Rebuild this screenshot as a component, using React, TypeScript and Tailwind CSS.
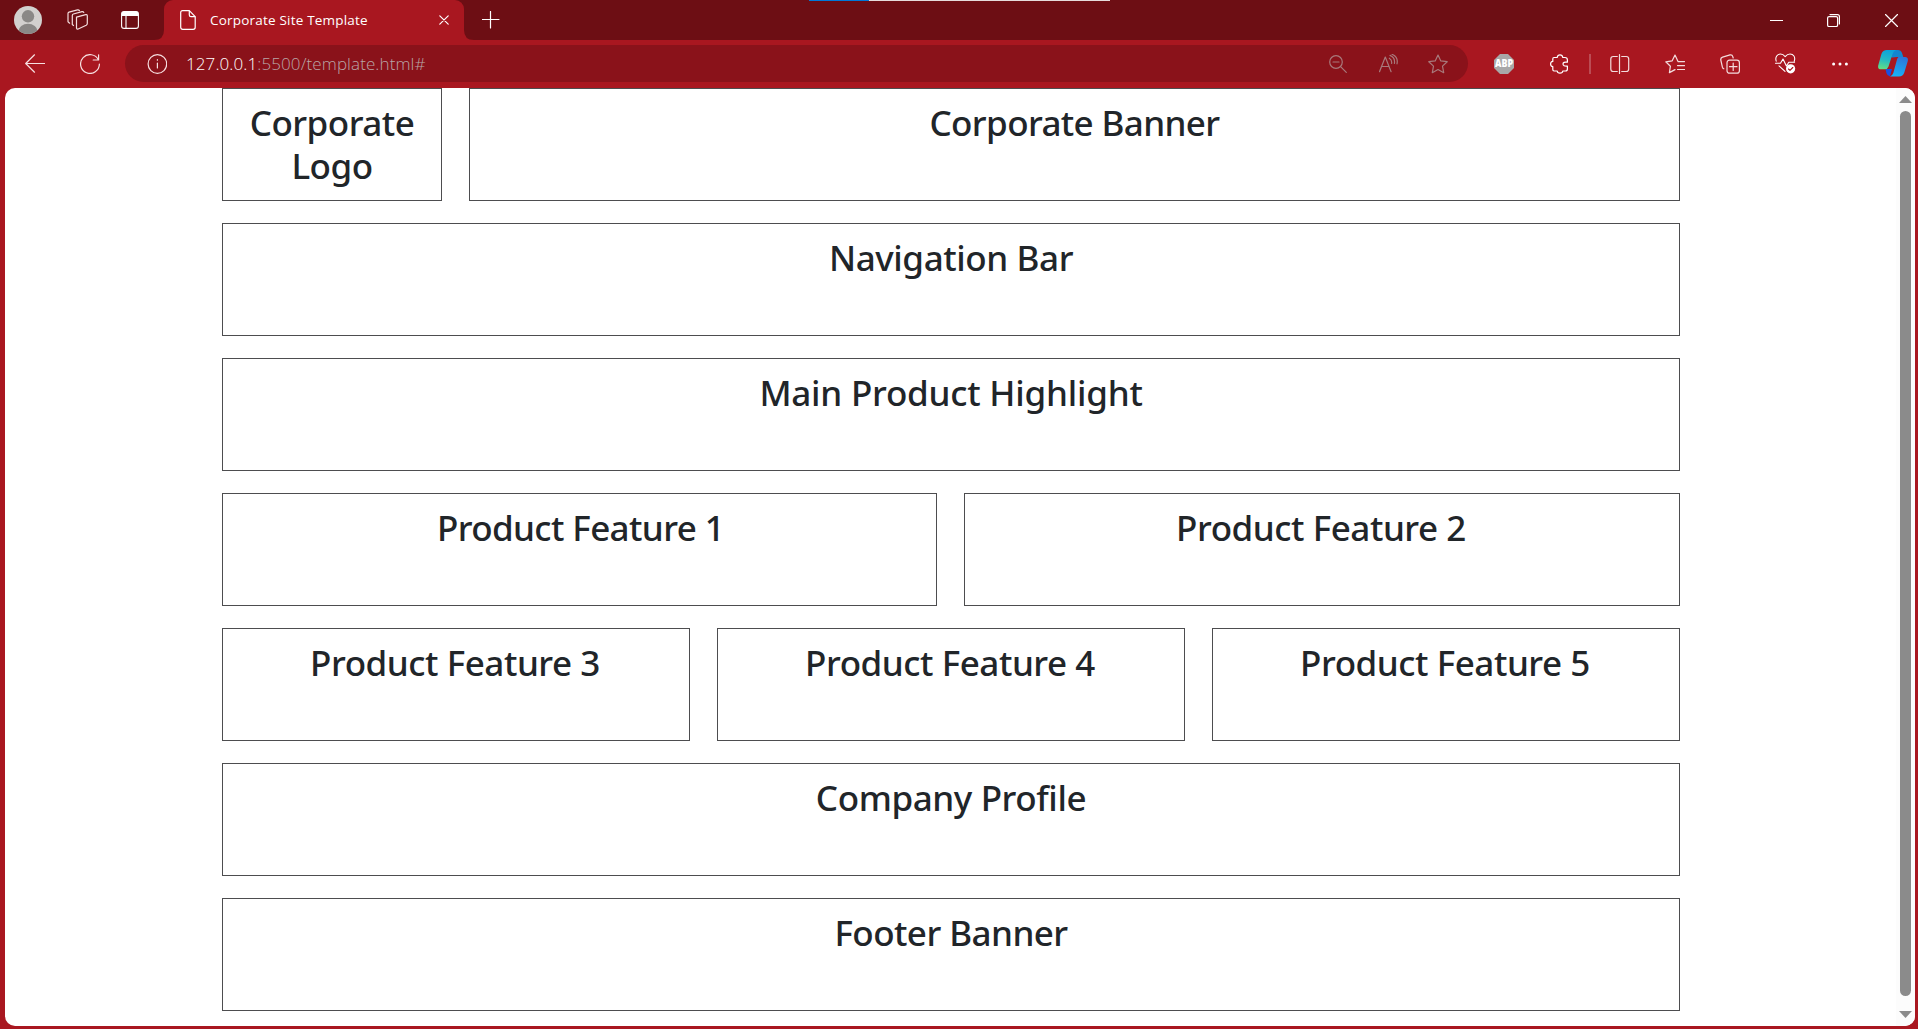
import React from "react";

const heading =
  "font-['Noto_Sans','Open_Sans',sans-serif] text-[35px] leading-[43px] font-[550] text-[#212529] text-center";

function Box({ label, className = "flex-1", tracking = "tracking-[-0.45px]" }: { label: string; className?: string; tracking?: string }) {
  return (
    <div className={`h-[113px] border border-[#4d4d4f] pt-3 ${className}`}>
      <h1 className={`${heading} ${tracking}`}>{label}</h1>
    </div>
  );
}

function Row({ children }: { children: React.ReactNode }) {
  return <div className="flex gap-[27px]">{children}</div>;
}

function Icon({ children, className = "", w = 20, stroke = "#f3dcdd" }: { children: React.ReactNode; className?: string; w?: number; stroke?: string }) {
  return (
    <svg
      width={w}
      height={w}
      viewBox={`0 0 ${w} ${w}`}
      fill="none"
      stroke={stroke}
      strokeWidth="1.2"
      strokeLinecap="round"
      strokeLinejoin="round"
      className={`shrink-0 ${className}`}
    >
      {children}
    </svg>
  );
}

function TitleBar() {
  return (
    <div className="relative flex h-10 bg-[#6d0e14]">
      <div className="absolute left-[809px] top-0 flex h-px w-[301px] bg-[#e6dcdc]">
        <div className="h-px w-[60px] bg-[#0078d7]" />
      </div>
      <div className="flex w-[164px] items-center pl-[14px]">
        <svg width="28" height="28" viewBox="0 0 28 28" className="shrink-0">
          <defs>
            <clipPath id="avatar">
              <circle cx="14" cy="14" r="14" />
            </clipPath>
          </defs>
          <g clipPath="url(#avatar)">
            <rect width="28" height="28" fill="#d2d0ce" />
            <circle cx="14" cy="10.3" r="6.2" fill="#8a8886" />
            <ellipse cx="14" cy="25" rx="9.5" ry="7.2" fill="#8a8886" />
          </g>
        </svg>
        <Icon w={22} className="ml-[25px]">
          <path d="M9.5 8.2 18.7 5.7Q20.3 5.3 20.3 7V14.5Q20.3 15.6 19.2 16.2L11.2 20Q9.6 20.4 9.5 19Z" />
          <path d="M6.5 16.5 5.3 15.6V6.5Q5.3 5.4 6.4 5L15 2.7Q16.3 2.4 16.8 3.4" />
          <path d="M2.6 14.2 1 12.8V4.6Q1 3.5 2 3.1L10.5.9Q11.8.6 12.4 1.6" />
        </Icon>
        <svg width="18" height="18" viewBox="0 0 18 18" className="ml-8 shrink-0">
          <rect x=".6" y=".6" width="16.8" height="16.8" rx="2.5" fill="none" stroke="#fff" strokeWidth="1.1" />
          <path d="M.6 5V3Q.6.6 3 .6H15Q17.4.6 17.4 3V5Z" fill="#fff" />
          <path d="M5 5V17" stroke="#fff" strokeWidth="1.1" />
        </svg>
      </div>
      <div className="relative flex w-[300px] items-center rounded-t-[9px] bg-[#a91720] pl-4">
        <svg width="10" height="10" className="absolute -left-[10px] bottom-0">
          <path d="M10 0V10H0Q10 10 10 0Z" fill="#a91720" />
        </svg>
        <svg width="10" height="10" className="absolute -right-[10px] bottom-0">
          <path d="M0 0V10H10Q0 10 0 0Z" fill="#a91720" />
        </svg>
        <svg width="16" height="20" viewBox="0 0 16 20" fill="none" stroke="#fff" strokeWidth="1.2" strokeLinejoin="round" className="shrink-0">
          <path d="M2.5.7H9.3L15.2 6.6V17.3Q15.2 19.3 13.2 19.3H2.7Q.7 19.3.7 17.3V2.5Q.7.7 2.5.7Z" />
          <path d="M9.3.7V5Q9.3 6.6 11 6.6H15.2" />
        </svg>
        <span className="ml-[14px] w-[229px] whitespace-nowrap font-['Open_Sans',sans-serif] text-[13.5px] tracking-[0.2px] text-white">
          Corporate Site Template
        </span>
        <Icon w={10} stroke="#fff">
          <path d="M.8.8 9.2 9.2M9.2.8.8 9.2" />
        </Icon>
      </div>
      <div className="flex flex-1 items-center">
        <Icon w={18} className="ml-[18px]" stroke="#fff">
          <path d="M8.5 .5V17M.5 8.5H17" />
        </Icon>
        <div className="ml-auto flex items-center pr-5">
          <Icon w={13} stroke="#fff">
            <path d="M0 6.5H13" />
          </Icon>
          <Icon w={13} className="ml-11" stroke="#fff">
            <rect x=".6" y="2.6" width="10" height="10" rx="1.5" />
            <path d="M3 .6H10.5Q12.4.6 12.4 2.5V10" />
          </Icon>
          <Icon w={13} className="ml-[45px]" stroke="#fff">
            <path d="M.5.5 12.5 12.5M12.5.5.5 12.5" />
          </Icon>
        </div>
      </div>
    </div>
  );
}

function Toolbar() {
  return (
    <div className="flex h-12 items-center bg-[#a91720] pb-px">
      <Icon className="ml-[25px]" stroke="#f7dfe0">
        <path d="M19.5 9.5H.7M9.5.8.7 9.5 9.5 18.2" />
      </Icon>
      <Icon className="ml-[35px]" stroke="#f7dfe0">
        <path d="M18.5 6A9.4 9.4 0 1 0 19.4 10M18.6.8V6H13.2" />
      </Icon>
      <div className="ml-[25px] flex h-[37px] w-[1343px] items-center rounded-full bg-[#8a121a] pl-[22px]">
        <Icon stroke="#f7dfe0">
          <circle cx="10.4" cy="10" r="9.3" />
          <path d="M10.4 9V14M10.4 5.7V6.2" />
        </Icon>
        <span className="ml-[19px] whitespace-nowrap font-['Open_Sans',sans-serif] text-[17px] font-light tracking-[0.1px] text-white">
          127.0.0.1<span className="text-[#b9a5a6]">:5500/template.html#</span>
        </span>
        <div className="ml-auto mr-5 flex items-center">
          <Icon w={18} stroke="#a8797b">
            <circle cx="7" cy="7" r="6.3" />
            <path d="M11.6 11.6 17.3 17.3M4 7H10" />
          </Icon>
          <Icon className="ml-[32px]" stroke="#a8797b">
            <path d="M.5 17.7 6.3 3 12.1 17.7M2.5 12.5H10.1M10.3 4.2Q13.2 5.8 12.6 9.5M11 1.4Q16.4 3.6 15.4 9.5M13 .3Q19.5 3 18 9.8" />
          </Icon>
          <Icon className="ml-[29px]" stroke="#a8797b">
            <path d="M10 1 12.8 6.9 19.2 7.7 14.5 12.1 15.7 18.7 10 15.5 4.3 18.7 5.5 12.1.8 7.7 7.2 6.9Z" />
          </Icon>
        </div>
      </div>
      <svg width="20" height="20" viewBox="0 0 20 20" className="ml-[26px] shrink-0">
        <path d="M6 0H14L20 6V14L14 20H6L0 14V6Z" fill="#a8a8a8" />
        <text x="10" y="13.4" textAnchor="middle" textLength="18" lengthAdjust="spacingAndGlyphs" fontFamily="Open Sans, sans-serif" fontSize="9.6" fontWeight="800" fill="#fff">
          ABP
        </text>
      </svg>
      <Icon className="ml-[36px]" stroke="#fff">
        <path d="M4 3.5H7.2Q7.6 .8 10 .8T12.8 3.5H15Q17.4 3.5 17.4 6V8.2Q13 7.6 13 10T17.4 12V15Q17.4 17 15.4 17H12.8Q12.6 19.2 10 19.2T7.2 17H4Q2.8 17 2.8 15.6V12.6Q.6 12.4.6 10T2.8 7.4V5Q2.8 3.5 4 3.5Z" />
      </Icon>
      <div className="ml-[19px] h-5 w-[2px] bg-[#bb4c54]" />
      <Icon className="ml-[19px]">
        <path d="M7.3 2.5H3.2Q.8 2.5.8 5V15Q.8 17.5 3.2 17.5H7.3M11.7 2.5H16.3Q18.7 2.5 18.7 5V15Q18.7 17.5 16.3 17.5H11.7M9.5 .6V19.4" />
      </Icon>
      <Icon className="ml-[35px]">
        <path d="M19.5 7.6H13L10 1 7.2 6.8.8 7.8 5.4 12.2 4.4 18.6 10 15.6M12.5 11.6H19.5M12.5 15.5H19.5" />
      </Icon>
      <Icon className="ml-[35px]">
        <rect x="7" y="6.2" width="12.4" height="13" rx="2.5" />
        <path d="M13.2 9V16.4M9.5 12.7H17M3.8 14.8Q2.8 14.5 2.4 13.2L.8 6Q.4 3.8 2.6 3.1L10 .9Q12.2.4 12.8 2.6L13.2 4" />
      </Icon>
      <svg width="21" height="21" viewBox="0 0 21 21" fill="none" stroke="#fff" strokeWidth="1.1" strokeLinecap="round" strokeLinejoin="round" className="ml-[35px] shrink-0">
        <path d="M1.2 8.2C-.2 3.8 2.5 1 5.5 1 8 1 9.2 2.4 10.2 3.6 11.2 2.4 12.4 1 15 1 18.3 1 20.8 4 19.2 8.2M.5 10.3H5.5L8 6 11.4 13 13.8 9.3H19.6M4 12.8 10 18.3" />
        <circle cx="15.6" cy="15.8" r="4.6" fill="#fff" stroke="none" />
        <path d="M13.5 16 15 17.4 17.8 14.5" stroke="#a91720" />
      </svg>
      <svg width="18" height="4" className="ml-[35px] shrink-0" fill="#fff">
        <circle cx="2.6" cy="2" r="1.5" />
        <circle cx="9" cy="2" r="1.5" />
        <circle cx="15.4" cy="2" r="1.5" />
      </svg>
      <svg width="30" height="27" viewBox="0 0 30 27" className="ml-[29px] shrink-0">
        <defs>
          <linearGradient id="leaf" x1=".5" y1="0" x2=".3" y2="1">
            <stop offset="0" stopColor="#0ca3dc" />
            <stop offset=".5" stopColor="#25b9c4" />
            <stop offset="1" stopColor="#62df83" />
          </linearGradient>
          <linearGradient id="wing" x1=".6" y1="0" x2=".3" y2="1">
            <stop offset="0" stopColor="#2d75da" />
            <stop offset="1" stopColor="#16b5f8" />
          </linearGradient>
        </defs>
        <path d="M8 0H20Q23 0 24 3L25.3 7H19Q16 7 14.6 7.5L12 7Z" fill="#1286cf" />
        <path d="M7.5 19H14L12 26.5Q9.2 26 8.4 23Z" fill="#1a4fe0" />
        <path d="M9 0H18Q15.5 1 14.5 4L10.5 16.5Q9.5 19.3 7 19.3H3Q-.5 19.3.2 15.5L3.4 4Q4.7 0 9 0Z" fill="url(#leaf)" />
        <path d="M20.5 7H27Q30.5 7 29.8 11L26.3 22.5Q25 26.5 21 26.5H12Q14.5 25.5 15.3 23L19 9.5Q19.5 7.5 20.5 7Z" fill="url(#wing)" />
      </svg>
    </div>
  );
}

export default function App() {
  return (
    <div className="flex h-[1029px] w-[1918px] flex-col overflow-hidden bg-[#a91720]">
      <TitleBar />
      <Toolbar />
      <div className="mr-[3px] ml-[5px] flex h-[938px] overflow-hidden rounded-[10px] bg-white">
        <main className="ml-[217px] flex w-[1458px] flex-col gap-[22px]">
          <Row>
            <Box label="Corporate Logo" className="w-[220px] shrink-0 px-4" tracking="tracking-[-0.5px]" />
            <Box label="Corporate Banner" tracking="tracking-[-0.62px]" />
          </Row>
          <Row>
            <Box label="Navigation Bar" tracking="tracking-[-0.4px]" />
          </Row>
          <Row>
            <Box label="Main Product Highlight" tracking="tracking-[-0.22px]" />
          </Row>
          <Row>
            <Box label="Product Feature 1" className="w-[715px] shrink-0 pl-[2px]" tracking="tracking-[-0.6px]" />
            <Box label="Product Feature 2" className="flex-1 pr-[2px]" />
          </Row>
          <Row>
            <Box label="Product Feature 3" className="flex-1 pr-[2px]" />
            <Box label="Product Feature 4" className="flex-1 pr-[2px]" />
            <Box label="Product Feature 5" className="flex-1 pr-[2px]" />
          </Row>
          <Row>
            <Box label="Company Profile" tracking="tracking-[-0.4px]" />
          </Row>
          <Row>
            <Box label="Footer Banner" tracking="tracking-[-0.55px]" />
          </Row>
        </main>
        <div className="ml-auto flex w-[19px] flex-col items-center bg-[#fcfcfc] pt-2">
          <svg width="13" height="7">
            <path d="M0 7 6.5 0 13 7Z" fill="#8b8b8b" />
          </svg>
          <div className="mt-2 h-[885px] w-[11px] rounded-full bg-[#8b8b8b]" />
          <svg width="13" height="7" className="mt-[15px]">
            <path d="M0 0H13L6.5 7Z" fill="#8b8b8b" />
          </svg>
        </div>
      </div>
    </div>
  );
}
